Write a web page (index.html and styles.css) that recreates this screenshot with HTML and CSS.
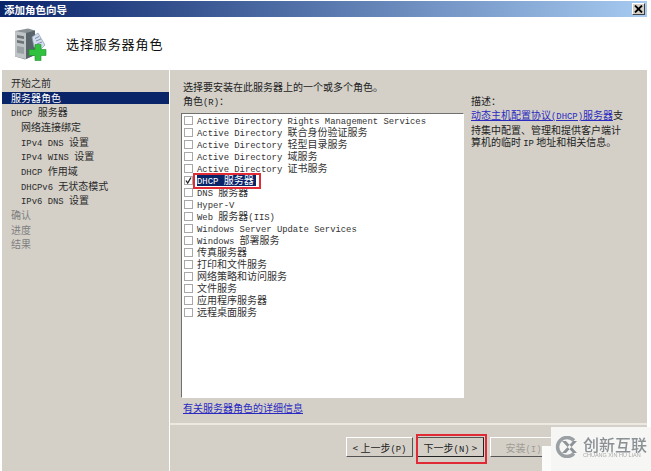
FILE: index.html
```html
<!DOCTYPE html>
<html lang="zh-CN">
<head>
<meta charset="utf-8">
<title>添加角色向导</title>
<link rel="stylesheet" href="styles.css">
</head>
<body>
<div class="window">
  <div class="titlebar">
    <span class="title">添加角色向导</span>
    <span class="close"><svg width="9" height="8" viewBox="0 0 9 8"><path d="M1 0.5L8 7.5M8 0.5L1 7.5" stroke="#000" stroke-width="1.800" fill="none"/></svg></span>
  </div>
  <header class="header">
    <svg class="logo" width="34" height="36" viewBox="0 0 34 36">
      <path d="M1 5L14 2.500L21 4.500V29L11 33.500L1 30.500Z" fill="#8a9194"/>
      <path d="M1 5L12 7V33L1 30.500Z" fill="#bfc4c6"/>
      <path d="M12 7L21 4.500V29L12 33Z" fill="#59636a"/>
      <path d="M3 9L10 10.300V13L3 11.800ZM3 14L10 15.300V18L3 16.800Z" fill="#6d7579"/>
      <path d="M3 20L10 21.300V28L3 26.800Z" fill="#9aa1a4"/>
      <path d="M18 11L24 7L31 19L26 24L20 21Z" fill="#d2dceb" stroke="#8b9bb3" stroke-width=".7"/>
      <path d="M21 12.500L25 10.500M22 15L27 13M23 18L28 16" stroke="#7f90ad" stroke-width="1"/>
      <path d="M21 18.500H27V23.500H32V29.500H27V34.500H21V29.500H15V23.500H21Z" fill="#30c23e" stroke="#1f8f2a" stroke-width=".6"/>
    </svg>
    <h1 class="heading">选择服务器角色</h1>
  </header>
  <div class="main">
    <nav class="nav">
      <div class="step">开始之前</div>
      <div class="step current">服务器角色</div>
      <div class="step"><span class="l">DHCP </span>服务器</div>
      <div class="step sub">网络连接绑定</div>
      <div class="step sub"><span class="l">IPv4 DNS </span>设置</div>
      <div class="step sub"><span class="l">IPv4 WINS </span>设置</div>
      <div class="step sub"><span class="l">DHCP </span>作用域</div>
      <div class="step sub"><span class="l">DHCPv6 </span>无状态模式</div>
      <div class="step sub"><span class="l">IPv6 DNS </span>设置</div>
      <div class="step off">确认</div>
      <div class="step off">进度</div>
      <div class="step off">结果</div>
    </nav>
    <div class="right">
      <section class="content">
        <div class="columns">
          <div class="picker">
            <p class="intro">选择要安装在此服务器上的一个或多个角色。</p>
            <p class="intro">角色<span class="l">(R)</span>：</p>
            <ul class="list">
              <li class="role"><i class="box"></i><span class="name"><span class="l">Active Directory Rights Management Services</span></span></li>
              <li class="role"><i class="box"></i><span class="name"><span class="l">Active Directory </span>联合身份验证服务</span></li>
              <li class="role"><i class="box"></i><span class="name"><span class="l">Active Directory </span>轻型目录服务</span></li>
              <li class="role"><i class="box"></i><span class="name"><span class="l">Active Directory </span>域服务</span></li>
              <li class="role"><i class="box"></i><span class="name"><span class="l">Active Directory </span>证书服务</span></li>
              <li class="role"><i class="box"><svg width="9" height="9" viewBox="0 0 9 9"><path d="M2 4.500L3.700 7L7 1.500" stroke="#222" stroke-width="1.300" fill="none"/></svg></i><span class="name selected"><span class="l">DHCP </span>服务器</span></li>
              <li class="role"><i class="box"></i><span class="name"><span class="l">DNS </span>服务器</span></li>
              <li class="role"><i class="box"></i><span class="name"><span class="l">Hyper-V</span></span></li>
              <li class="role"><i class="box"></i><span class="name"><span class="l">Web </span>服务器<span class="l">(IIS)</span></span></li>
              <li class="role"><i class="box"></i><span class="name"><span class="l">Windows Server Update Services</span></span></li>
              <li class="role"><i class="box"></i><span class="name"><span class="l">Windows </span>部署服务</span></li>
              <li class="role"><i class="box"></i><span class="name">传真服务器</span></li>
              <li class="role"><i class="box"></i><span class="name">打印和文件服务</span></li>
              <li class="role"><i class="box"></i><span class="name">网络策略和访问服务</span></li>
              <li class="role"><i class="box"></i><span class="name">文件服务</span></li>
              <li class="role"><i class="box"></i><span class="name">应用程序服务器</span></li>
              <li class="role"><i class="box"></i><span class="name">远程桌面服务</span></li>
            </ul>
            <a class="link more">有关服务器角色的详细信息</a>
          </div>
          <aside class="desc">
            <p class="desc-label">描述：</p>
            <p class="desc-text"><a class="link">动态主机配置协议<span class="l">(DHCP)</span>服务器</a>支持集中配置、管理和提供客户端计算机的临时 <span class="l">IP</span> 地址和相关信息。</p>
          </aside>
        </div>
      </section>
      <footer class="footer">
        <button class="btn">&lt; 上一步<span class="l">(P)</span></button>
        <button class="btn default">下一步<span class="l">(N)</span> &gt;</button>
        <button class="btn off-btn">安装<span class="l">(I)</span></button>
      </footer>
    </div>
  </div>
  <div class="mark-red mark-list"></div>
  <div class="mark-red mark-next"></div>
  <div class="watermark">
    <svg class="wm-logo" width="24" height="22" viewBox="0 0 24 22"><path d="M19 4.500A9.500 9.500 0 1 0 19 17.500" stroke="#9aa0a3" stroke-width="3.500" fill="none"/><path d="M7 5L11 5L22 17L18 17ZM22 5L18 5L7 17L11 17Z" fill="#8d9396"/></svg>
    <div class="wm-text"><span class="wm-cn">创新互联</span><span class="wm-en">CHUANG XIN HU LIAN</span></div>
  </div>
</div>
</body>
</html>
```
FILE: styles.css
```css
* { box-sizing: border-box; }
html, body { margin: 0; padding: 0; width: 651px; height: 471px; overflow: hidden; background: #fff; }
body { font-family: "Noto Sans CJK SC", sans-serif; font-size: 10px; color: #222; }
p { margin: 0; }
.l { font-family: "Liberation Mono", monospace; font-size: 8.900px; }
.window { position: relative; width: 647px; height: 471px; display: flex; flex-direction: column; filter: blur(.3px); }
.titlebar { height: 16px; flex: none; margin-top: 1px; padding: 0 2px 0 4px; display: flex; align-items: center; justify-content: space-between; background: linear-gradient(90deg, #0a246a, #a6caf0); }
.title { color: #fff; font-weight: 700; font-size: 10.500px; }
.close { width: 13px; height: 12px; background: #d4d0c8; border: 1px solid; border-color: #fff #404040 #404040 #fff; display: flex; align-items: center; justify-content: center; }
.header { height: 53px; flex: none; background: #fff; display: flex; align-items: center; padding-left: 14px; }
.logo { flex: none; }
.heading { margin: 0 0 0 18px; font-size: 13px; font-weight: 400; color: #111; letter-spacing: .9px; }
.main { flex: 1; display: flex; min-height: 0; margin-left: 2px; background: #d4d0c8; }
.nav { width: 168px; flex: none; padding-top: 6px; border-right: 1px solid #fff; }
.step { height: 14.680px; line-height: 14px; padding-left: 9px; white-space: nowrap; color: #2a2a2a; }
.step.current { background: #0a246a; color: #fff; height: 12.500px; line-height: 12px; margin: 1px 0 1.180px; }
.step.sub { padding-left: 19px; }
.step.off { color: #808080; }
.right { flex: 1; display: flex; flex-direction: column; min-width: 0; }
.content { height: 355px; flex: none; border-bottom: 2px solid #ece9e2; padding: 10px 0 0 11px; }
.columns { display: flex; height: 100%; }
.picker { width: 283px; flex: none; }
.intro { height: 14px; line-height: 14px; padding-left: 2px; white-space: nowrap; }
.list { list-style: none; margin: 5px 0 0; padding: 0 0 0 2px; height: 285px; background: #fff; border: 1px solid; border-color: #707070 #fff #fff #707070; }
.role { height: 12px; display: flex; align-items: center; color: #333; }
.name { line-height: 12px; height: 12px; white-space: pre; }
.box { width: 9px; height: 9px; margin-right: 4px; flex: none; background: #fff; border: 1px solid #a8a8a8; display: flex; align-items: center; justify-content: center; }
.box svg { flex: none; }
.selected { background: #0a246a; color: #fff; padding-right: 2px; }
.link { color: #2a2ac0; text-decoration: underline; }
.more { display: block; margin-top: 3px; padding-left: 2px; line-height: 14px; }
.desc { width: 160px; padding: 14px 0 0 7px; }
.desc-label { height: 14px; line-height: 14px; }
.desc-text { line-height: 12.500px; margin-top: 1px; width: 153px; }
.footer { flex: 1; display: flex; gap: 4px; padding: 12px 0 0 176px; }
.btn { width: 67px; height: 20px; padding: 0; font: inherit; color: #222; background: #d4d0c8; border: 1px solid; border-color: #fff #555 #555 #fff; }
.default { border-color: #222; border-top-color: #555; border-left-color: #888; }
.off-btn { color: #a09c94; margin-left: 2px; }
.mark-red { position: absolute; border: 2px solid #e02a35; }
.mark-list { left: 193px; top: 173px; width: 68px; height: 16px; }
.mark-next { left: 416px; top: 434px; width: 71px; height: 30px; }
.watermark { position: absolute; left: 551px; top: 427px; width: 100px; height: 44px; background: #f6f6f5; display: flex; align-items: flex-start; padding: 9px 0 0 4px; gap: 4px; }
.watermark::before { content: ""; position: absolute; left: -9px; top: 19px; width: 9px; height: 25px; background: #fbfbfa; }
.wm-logo { flex: none; }
.wm-text { display: flex; flex-direction: column; line-height: 1; white-space: nowrap; }
.wm-cn { font-size: 16px; color: #8a9094; font-weight: 500; }
.wm-en { font-family: "Liberation Sans", sans-serif; font-size: 5.500px; margin-top: 1px; color: #aaa; }
```
